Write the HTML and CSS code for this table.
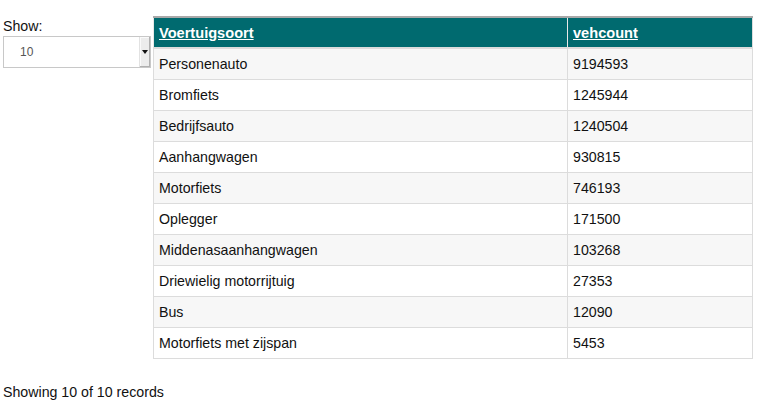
FILE: index.html
```html
<!DOCTYPE html>
<html>
<head>
<meta charset="utf-8">
<link rel="stylesheet" href="styles.css">
</head>
<body>
<div class="page">
  <div class="side">
    <label class="show-label">Show:</label>
    <div class="select">
      <span class="select-value">10</span>
      <span class="select-arrow"><span class="tri"></span></span>
    </div>
  </div>
  <table class="grid">
    <thead>
      <tr><th class="c1"><a href="#">Voertuigsoort</a></th><th><a href="#">vehcount</a></th></tr>
    </thead>
    <tbody>
      <tr><td>Personenauto</td><td>9194593</td></tr>
      <tr><td>Bromfiets</td><td>1245944</td></tr>
      <tr><td>Bedrijfsauto</td><td>1240504</td></tr>
      <tr><td>Aanhangwagen</td><td>930815</td></tr>
      <tr><td>Motorfiets</td><td>746193</td></tr>
      <tr><td>Oplegger</td><td>171500</td></tr>
      <tr><td>Middenasaanhangwagen</td><td>103268</td></tr>
      <tr><td>Driewielig motorrijtuig</td><td>27353</td></tr>
      <tr><td>Bus</td><td>12090</td></tr>
      <tr><td>Motorfiets met zijspan</td><td>5453</td></tr>
    </tbody>
  </table>
</div>
<p class="footer">Showing 10 of 10 records</p>
</body>
</html>
```
FILE: styles.css
```css
html, body {
  margin: 0;
  padding: 0;
  background: #fff;
  font-family: "Liberation Sans", Arial, sans-serif;
  font-size: 14.2px;
  color: #111;
}
.page {
  display: flex;
  align-items: flex-start;
}
.side {
  width: 150px;
  padding-left: 3px;
  padding-top: 18px;
}
.show-label {
  display: block;
  line-height: 16px;
  height: 18px;
}
.select {
  display: flex;
  width: 148px;
  height: 32px;
  box-sizing: border-box;
  border: 1px solid #c8c8c8;
  background: #fff;
  position: relative;
}
.select-value {
  flex: 1;
  font-size: 12px;
  color: #555;
  line-height: 30px;
  padding-left: 16px;
}
.select-arrow {
  width: 10px;
  background: #ececec;
  border-left: 1px solid #e2e2e2;
  box-shadow: inset -1px -1px 0 #b0b0b0, inset 1px 1px 0 #fafafa;
  display: flex;
  align-items: center;
  justify-content: center;
}
.tri {
  width: 0;
  height: 0;
  border-left: 3px solid transparent;
  border-right: 3px solid transparent;
  border-top: 4px solid #111;
}
.grid {
  margin-top: 16px;
  width: 600px;
  border-collapse: collapse;
  border: 1px solid #dcdcdc;
  font-size: 14.2px;
}
.grid th {
  background: #006a6f;
  text-align: left;
  height: 29px;
  padding: 0 5px;
  border-top: 2px solid #a9a9a9;
  border-bottom: 2px solid #dcdcdc;
  border-left: 1px solid #e8e8e8;
  font-weight: bold;
  font-size: 14.6px;
}
.grid th.c1 {
  width: 403px;
}
.grid th a {
  color: #fff;
  text-decoration: underline;
}
.grid td {
  height: 30px;
  padding: 0 5px;
  border: 1px solid #dcdcdc;
}
.grid tbody tr:nth-child(odd) td {
  background: #f7f7f7;
}
.footer {
  margin: 25px 0 0 3px;
  line-height: 16px;
}
```
